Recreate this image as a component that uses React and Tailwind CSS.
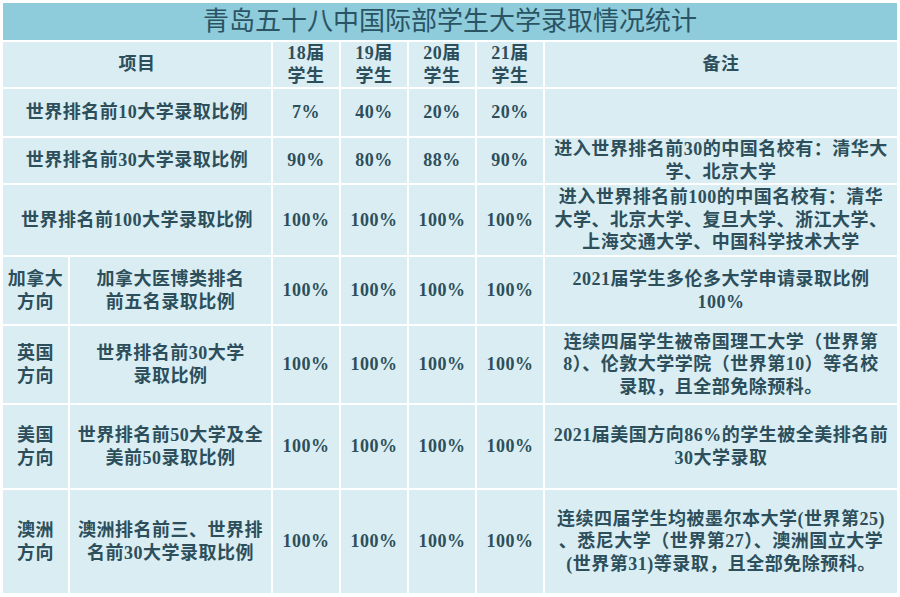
import React from 'react';

const font = { fontFamily: '"Liberation Serif", "Noto Sans CJK SC", serif' };

function Cell({ children, className = '', ...rest }) {
    return (
        <td className={`bg-[#d9edf3] text-center align-middle p-0 whitespace-nowrap leading-[22.5px] ${className}`} {...rest}>
            {children}
        </td>
    );
}

const pct = (a, b, c, d) => [a, b, c, d].map((v, i) => <Cell key={i}>{v}</Cell>);

function App() {
    return (
        <div className="w-[900px] h-[597px] bg-white pt-[1px] pl-[1px] overflow-hidden">
            <table
                className="w-[898px] table-fixed border-separate border-spacing-[2px] text-[18px] tracking-[0.5px] text-[#2d4f5b] font-semibold"
                style={font}
            >
                <colgroup>
                    <col className="w-[65px]" />
                    <col className="w-[201px]" />
                    <col className="w-[66px]" />
                    <col className="w-[66px]" />
                    <col className="w-[66px]" />
                    <col className="w-[66px]" />
                    <col className="w-[352px]" />
                </colgroup>
                <tbody>
                    <tr className="h-[37px]">
                        <td colSpan={7} className="bg-[#8ecbdb] text-center align-middle p-0 text-[26px] tracking-[0px] font-normal text-[#2a5463] leading-[37px]">
                            青岛五十八中国际部学生大学录取情况统计
                        </td>
                    </tr>
                    <tr className="h-[45px]">
                        <Cell colSpan={2} className="bg-[#b7dde8]">项目</Cell>
                        <Cell className="bg-[#b7dde8]">18届<br />学生</Cell>
                        <Cell className="bg-[#b7dde8]">19届<br />学生</Cell>
                        <Cell className="bg-[#b7dde8]">20届<br />学生</Cell>
                        <Cell className="bg-[#b7dde8]">21届<br />学生</Cell>
                        <Cell className="bg-[#b7dde8]">备注</Cell>
                    </tr>
                    <tr className="h-[47px]">
                        <Cell colSpan={2}>世界排名前10大学录取比例</Cell>
                        {pct('7%', '40%', '20%', '20%')}
                        <Cell></Cell>
                    </tr>
                    <tr className="h-[45px]">
                        <Cell colSpan={2}>世界排名前30大学录取比例</Cell>
                        {pct('90%', '80%', '88%', '90%')}
                        <Cell>进入世界排名前30的中国名校有：清华大<br />学、北京大学</Cell>
                    </tr>
                    <tr className="h-[70px]">
                        <Cell colSpan={2}>世界排名前100大学录取比例</Cell>
                        {pct('100%', '100%', '100%', '100%')}
                        <Cell>进入世界排名前100的中国名校有：清华<br />大学、北京大学、复旦大学、浙江大学、<br />上海交通大学、中国科学技术大学</Cell>
                    </tr>
                    <tr className="h-[67px]">
                        <Cell>加拿大<br />方向</Cell>
                        <Cell>加拿大医博类排名<br />前五名录取比例</Cell>
                        {pct('100%', '100%', '100%', '100%')}
                        <Cell>2021届学生多伦多大学申请录取比例<br />100%</Cell>
                    </tr>
                    <tr className="h-[77px]">
                        <Cell>英国<br />方向</Cell>
                        <Cell>世界排名前30大学<br />录取比例</Cell>
                        {pct('100%', '100%', '100%', '100%')}
                        <Cell>连续四届学生被帝国理工大学（世界第<br />8）、伦敦大学学院（世界第10）等名校<br />录取，且全部免除预科。</Cell>
                    </tr>
                    <tr className="h-[83px]">
                        <Cell>美国<br />方向</Cell>
                        <Cell>世界排名前50大学及全<br />美前50录取比例</Cell>
                        {pct('100%', '100%', '100%', '100%')}
                        <Cell>2021届美国方向86%的学生被全美排名前<br />30大学录取</Cell>
                    </tr>
                    <tr className="h-[103px]">
                        <Cell>澳洲<br />方向</Cell>
                        <Cell>澳洲排名前三、世界排<br />名前30大学录取比例</Cell>
                        {pct('100%', '100%', '100%', '100%')}
                        <Cell>连续四届学生均被墨尔本大学(世界第25)<br />、悉尼大学（世界第27）、澳洲国立大学<br />(世界第31)等录取，且全部免除预科。</Cell>
                    </tr>
                </tbody>
            </table>
        </div>
    );
}

export default App;
